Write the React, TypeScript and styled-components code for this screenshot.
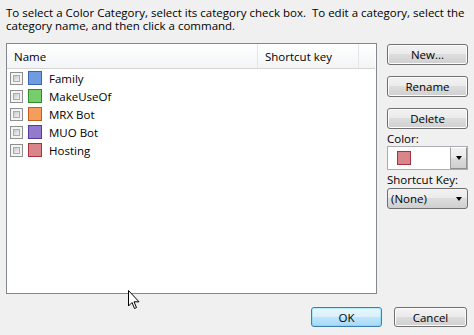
import React from "react";
import styled, { createGlobalStyle } from "styled-components";

const GlobalStyle = createGlobalStyle`
    html, body {
        margin: 0;
        padding: 0;
        background: #f0f0f0;
    }
    body {
        font-family: "Open Sans", "Noto Sans", "Liberation Sans", sans-serif;
        font-size: 11.5px;
        color: #000;
    }
`;

type Category = {
    name: string;
    fill: string;
    edge: string;
};

const categories: Category[] = [
    { name: "Family", fill: "#6f9be0", edge: "#3b64b3" },
    { name: "MakeUseOf", fill: "#78cd6b", edge: "#2f8c2c" },
    { name: "MRX Bot", fill: "#f49d5c", edge: "#c15f1c" },
    { name: "MUO Bot", fill: "#937acf", edge: "#553b9b" },
    { name: "Hosting", fill: "#d9868a", edge: "#a9323d" },
];

const buttonFace = "linear-gradient(#f2f2f2 0%, #ebebeb 49%, #dddddd 50%, #cfcfcf 100%)";

const Dialog = styled.div`
    position: relative;
    width: 474px;
    height: 335px;
    padding: 6px 0 0 6px;
    box-sizing: border-box;
    display: flex;
    flex-direction: column;
`;

const Intro = styled.p`
    margin: 0;
    line-height: 13px;
    width: 460px;
`;

const Main = styled.div`
    display: flex;
    gap: 10px;
    margin-top: 11px;
`;

const ListBox = styled.div`
    width: 371px;
    height: 251px;
    box-sizing: border-box;
    border: 1px solid #828790;
    background: #fff;
    display: flex;
    flex-direction: column;
`;

const Header = styled.div`
    display: flex;
    height: 25px;
    box-sizing: border-box;
    background: linear-gradient(#ffffff, #f3f4f6);
    border-bottom: 1px solid #d5d5d5;
    margin-right: 1px;
`;

const HeaderCell = styled.div<{ $width: number }>`
    width: ${(p) => p.$width}px;
    box-sizing: border-box;
    padding-left: 7px;
    display: flex;
    align-items: center;
    border-right: 1px solid #e3e5e8;
`;

const Rows = styled.div`
    display: flex;
    flex-direction: column;
    padding: 0 0 0 3px;
`;

const Row = styled.div`
    display: flex;
    align-items: center;
    height: 18px;
    gap: 5px;
`;

const CheckBox = styled.span`
    width: 13px;
    height: 13px;
    box-sizing: border-box;
    border: 1px solid #8e8f8f;
    padding: 2px;
    background: #f4f4f4;
    display: inline-flex;

    &::after {
        content: "";
        flex: 1;
        border: 1px solid #a9adb2;
        background: linear-gradient(135deg, #c4c8ce, #f4f4f4);
    }
`;

const Swatch = styled.span<{ $fill: string; $edge: string }>`
    width: 14px;
    height: 14px;
    box-sizing: border-box;
    background: ${(p) => p.$fill};
    border: 1px solid ${(p) => p.$edge};
    margin-right: 2px;
`;

const Side = styled.div`
    display: flex;
    flex-direction: column;
    width: 81px;
    padding-top: 1px;
`;

const Button = styled.button<{ $primary?: boolean; $width?: number }>`
    font: inherit;
    color: #000;
    width: ${(p) => p.$width ?? 81}px;
    height: 21px;
    padding: 0;
    flex: none;
    border-radius: 3px;
    border: 1px solid ${(p) => (p.$primary ? "#3c7fb1" : "#707070")};
    box-shadow: inset 0 0 0 1px ${(p) => (p.$primary ? "#48d5fd55" : "#fcfcfc")};
    background: ${(p) =>
        p.$primary
            ? "linear-gradient(#eaf6fd 0%, #d9f0fc 49%, #bee6fd 50%, #a7d9f5 100%)"
            : buttonFace};
    margin-bottom: 11px;

    &:nth-of-type(3) {
        margin-bottom: 2px;
    }
`;

const Label = styled.div`
    line-height: 15px;
`;

const ColorCombo = styled.div`
    display: flex;
    height: 24px;
    box-sizing: border-box;
    border: 1px solid #abadb3;
    background: #fff;
    margin: 0 0 2px;
`;

const ColorField = styled.div`
    flex: 1;
    display: flex;
    align-items: center;
    padding-left: 9px;
`;

const DropArrow = styled.div`
    width: 15px;
    display: flex;
    align-items: center;
    justify-content: center;
    border: 1px solid #8e8f8f;
    border-top-color: #fff;
    border-left-color: #a0a0a0;
    background: ${buttonFace};

    &::after {
        content: "";
        border-left: 3.5px solid transparent;
        border-right: 3.5px solid transparent;
        border-top: 4px solid #000;
    }
`;

const SelectBox = styled.div`
    display: flex;
    align-items: center;
    justify-content: space-between;
    height: 21px;
    box-sizing: border-box;
    border: 1px solid #707070;
    border-radius: 3px;
    padding: 0 5px 0 3px;
    margin-top: 1px;
    background: ${buttonFace};

    &::after {
        content: "";
        border-left: 3.5px solid transparent;
        border-right: 3.5px solid transparent;
        border-top: 4px solid #000;
    }
`;

const Footer = styled.div`
    display: flex;
    justify-content: flex-end;
    gap: 12px;
    margin-top: 13px;
    padding-right: 7px;

    & > button {
        margin-bottom: 0;
        height: 20px;
    }
`;

const Pointer = styled.svg`
    position: absolute;
    left: 128px;
    top: 290px;
`;

const App = () => {
    return (
        <Dialog>
            <GlobalStyle />
            <Intro>
                To select a Color Category, select its category check box.&nbsp; To edit a
                category, select the category name, and then click a command.
            </Intro>
            <Main>
                <ListBox>
                    <Header>
                        <HeaderCell $width={251}>Name</HeaderCell>
                        <HeaderCell $width={101}>Shortcut key</HeaderCell>
                    </Header>
                    <Rows>
                        {categories.map((c) => (
                            <Row key={c.name}>
                                <CheckBox />
                                <Swatch $fill={c.fill} $edge={c.edge} />
                                <span>{c.name}</span>
                            </Row>
                        ))}
                    </Rows>
                </ListBox>
                <Side>
                    <Button>New...</Button>
                    <Button>Rename</Button>
                    <Button>Delete</Button>
                    <Label>Color:</Label>
                    <ColorCombo>
                        <ColorField>
                            <Swatch $fill="#d9868a" $edge="#a9323d" />
                        </ColorField>
                        <DropArrow />
                    </ColorCombo>
                    <Label>Shortcut Key:</Label>
                    <SelectBox>(None)</SelectBox>
                </Side>
            </Main>
            <Footer>
                <Button $primary $width={71}>OK</Button>
                <Button $width={73}>Cancel</Button>
            </Footer>
            <Pointer width="12" height="20" viewBox="0 0 12 20">
                <path
                    d="M0.5 0.5 L0.5 16 L4 12.5 L6.5 18.5 L8.5 17.6 L6 11.8 L11 11.8 Z"
                    fill="#fff"
                    stroke="#000"
                    strokeWidth="1"
                    strokeLinejoin="miter"
                />
            </Pointer>
        </Dialog>
    );
};

export default App;
